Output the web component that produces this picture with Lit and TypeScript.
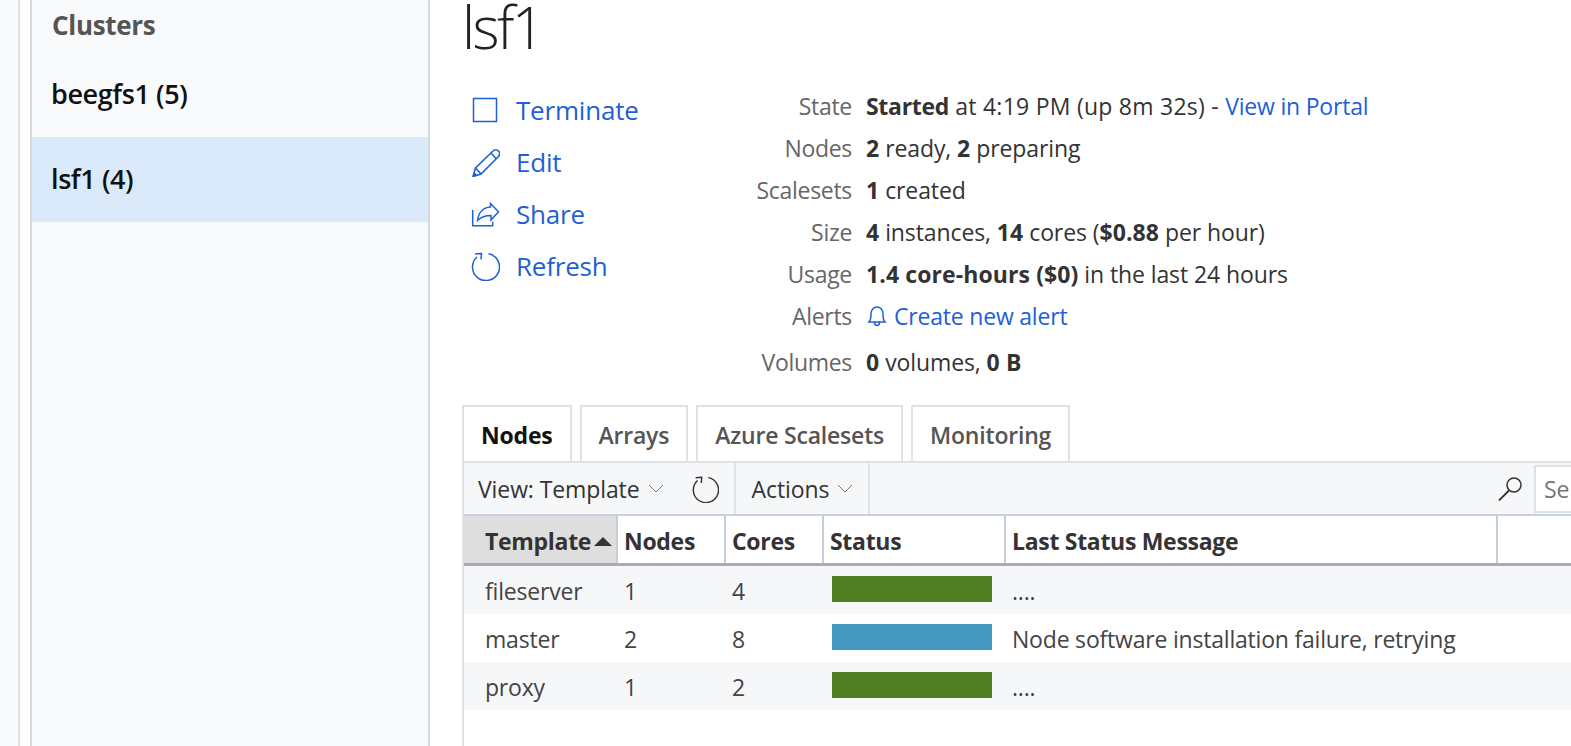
import { LitElement, html, css, svg } from 'lit';
import { customElement } from 'lit/decorators.js';

const refreshPath = svg`<path d="M18.500 2.800A13.500 13.500 0 1 1 7 6M5 3l6.500-.5L11 8.500" fill="none" stroke="currentColor" stroke-width="1.500"/>`;

const icons = {
  stop: svg`<rect x="3.500" y="3.500" width="23" height="23" fill="none" stroke="currentColor" stroke-width="1.500"/>`,
  edit: svg`<path d="M3 29.500L5.500 21 22.500 4.500c2-2 4.500-2 6-.5s1.500 4-.5 6L11 27zM5.500 21l5.500 6M21 6l5.500 6" fill="none" stroke="currentColor" stroke-width="1.600"/><path d="M3 29.500l1.200-4.500 3.300 3.300z" fill="currentColor"/>`,
  share: svg`<path d="M2.700 11v15.700h20v-4M20.500 4.500l8 8.200-7.500 8.300v-4.500c-6 0-10 1.500-13.500 5 1-7.500 5.500-13 13-13.500z" fill="none" stroke="currentColor" stroke-width="1.500"/>`,
  refresh: refreshPath,
};

@customElement('app-root')
export class AppRoot extends LitElement {
  static styles = css`
    :host {
      display: block;
      height: 746px;
      width: 1571px;
      overflow: hidden;
      background: #fff;
      font-family: 'Open Sans', 'Noto Sans', sans-serif;
      font-size: 22px;
      color: #333;
    }
    .page { display: flex; height: 746px; }
    .rail { width: 18px; background: #f8fafc; border-right: 2px solid #dde1e6; }
    .gap { width: 10px; }
    .side {
      width: 396px;
      background: #f8fafc;
      border-left: 2px solid #d5d9de;
      border-right: 2px solid #d5d9de;
    }
    .side h3 { margin: 0; padding: 7px 0 0 20px; height: 52px; box-sizing: border-box; font-size: 26px; font-weight: 700; color: #555; letter-spacing: -0.3px; line-height: 36px; }
    .item { display: flex; align-items: center; padding: 0 0 2px 19px; height: 85px; box-sizing: border-box; font-size: 27px; font-weight: 600; color: #111; letter-spacing: -0.4px; }
    .item.sel { background: #dbeafb; }
    .main { flex: 1; padding-left: 32px; min-width: 0; }
    h1 { margin: 0; height: 82px; font-size: 58px; font-weight: 300; line-height: 54px; color: #222; letter-spacing: -2.6px; }
    .summary { display: flex; height: 323px; }
    .actions { width: 285px; padding: 2px 0 0 8px; box-sizing: border-box; }
    .action { display: flex; align-items: center; gap: 16px; height: 52px; color: #1f5fd6; font-size: 26px; letter-spacing: -0.2px; }
    .action svg { width: 30px; height: 30px; }
    .props { display: grid; grid-template-columns: 103px auto; column-gap: 14px; grid-auto-rows: 42px; align-content: start; font-size: 23px; letter-spacing: -0.1px; margin-left: 2px; padding-top: 8px; }
    .props .k { text-align: right; color: #666; white-space: nowrap; justify-self: end; letter-spacing: -0.3px; }
    .props .v { white-space: nowrap; }
    .props b { letter-spacing: 0.1px; }
    .props b.tight { letter-spacing: -0.3px; }
    .props .time { letter-spacing: 0.25px; }
    .props a { color: #1f5fd6; text-decoration: none; letter-spacing: -0.2px; }
    .props .vol { margin-top: 4px; }
    .bell { display: inline-block; vertical-align: -3px; width: 22px; height: 24px; margin-right: 6px; }
    .tabs { display: flex; gap: 8px; height: 56px; }
    .tab { border: 2px solid #dde2e8; border-bottom: none; padding: 1px 17px 0; display: flex; align-items: center; font-size: 23px; font-weight: 600; color: #555; letter-spacing: -0.2px; }
    .tab.on { color: #111; font-weight: 700; }
    .panel { border-left: 2px solid #dde2e8; height: 285px; }
    .toolbar { display: flex; align-items: stretch; height: 55px; box-sizing: border-box; background: #f6f7f9; border-top: 2px solid #dde2e8; border-bottom: 2px solid #c9d1dc; font-size: 23px; letter-spacing: -0.1px; color: #333; }
    .tool { display: flex; align-items: center; padding: 0 15px 0 14px; border-right: 2px solid #dde2e8; gap: 8px; }
    .tool + .tool { padding: 0 15px 0 16px; }
    .tool .spin { margin-left: 19px; width: 28px; height: 28px; color: #333; }
    .spacer { flex: 1; }
    .search { display: flex; align-items: center; gap: 12px; }
    .search .box { width: 37px; height: 48px; background: #fff; border: 2px solid #dde2e8; border-right: none; color: #777; padding-left: 8px; box-sizing: border-box; display: flex; align-items: center; overflow: hidden; }
    .row { display: grid; grid-template-columns: 154px 108px 98px 182px 492px 1fr; align-items: center; }
    .head { height: 50px; box-sizing: border-box; border-bottom: 3px solid #a9adb3; font-weight: 700; font-size: 23px; letter-spacing: -0.3px; }
    .head > div { height: 100%; display: flex; align-items: center; padding: 3px 0 0 6px; box-sizing: border-box; border-right: 2px solid #c8ccd6; }
    .head > div.sorted { background: #dedede; padding-left: 21px; }
    .head > div:last-child { border-right: none; }
    .tri { width: 0; height: 0; border: 9px solid transparent; border-top: none; border-bottom-color: #333; margin-left: 3px; }
    .body { height: 48px; font-size: 23px; letter-spacing: -0.2px; color: #444; }
    .body.odd { background: #f6f7f9; }
    .body > div { padding: 2px 0 0 6px; }
    .body > div:first-child { padding-left: 21px; }
    .body > div.status { padding-top: 0; }
    .bar { height: 26px; width: 160px; margin-left: 2px; margin-top: -2px; }
  `;

  render() {
    const rows: [string, number, number, string, string][] = [
      ['fileserver', 1, 4, '#507d22', '....'],
      ['master', 2, 8, '#4398c0', 'Node software installation failure, retrying'],
      ['proxy', 1, 2, '#507d22', '....'],
    ];
    const chevron = html`<svg width="16" height="10" viewBox="0 0 16 10"><path d="M1 1l7 7 7-7" fill="none" stroke="#777" stroke-width="1"/></svg>`;
    return html`
      <div class="page">
        <div class="rail"></div>
        <div class="gap"></div>
        <div class="side">
          <h3>Clusters</h3>
          <div class="item">beegfs1 (5)</div>
          <div class="item sel">lsf1 (4)</div>
        </div>
        <div class="main">
          <h1>lsf1</h1>
          <div class="summary">
            <div class="actions">
              ${([['stop', 'Terminate'], ['edit', 'Edit'], ['share', 'Share'], ['refresh', 'Refresh']] as [keyof typeof icons, string][]).map(
                ([i, t]) => html`<div class="action"><svg viewBox="0 0 30 30">${icons[i]}</svg><span>${t}</span></div>`
              )}
            </div>
            <div class="props">
              <div class="k">State</div><div class="v"><b class="tight">Started</b><span class="time"> at 4:19 PM (up 8m 32s) - </span><a>View in Portal</a></div>
              <div class="k">Nodes</div><div class="v"><b>2</b> ready, <b>2</b> preparing</div>
              <div class="k">Scalesets</div><div class="v"><b>1</b> created</div>
              <div class="k">Size</div><div class="v"><b>4</b> instances, <b>14</b> cores (<b>$0.88</b> per hour)</div>
              <div class="k">Usage</div><div class="v"><b>1.4 core-hours ($0)</b> in the last 24 hours</div>
              <div class="k">Alerts</div><div class="v"><a><svg class="bell" viewBox="0 0 22 24"><path d="M3 18c2-2 2-4 2-8 0-4 2.500-7 6-7s6 3 6 7c0 4 0 6 2 8zM8.500 18.500c0 4 5 4 5 0" fill="none" stroke="currentColor" stroke-width="1.500"/></svg>Create new alert</a></div>
              <div class="k vol">Volumes</div><div class="v vol"><b>0</b> volumes, <b>0 B</b></div>
            </div>
          </div>
          <div class="tabs">
            <div class="tab on">Nodes</div><div class="tab">Arrays</div><div class="tab">Azure Scalesets</div><div class="tab">Monitoring</div>
          </div>
          <div class="panel">
            <div class="toolbar">
              <div class="tool">View: Template
                ${chevron}
                <svg class="spin" viewBox="0 0 30 30">${refreshPath}</svg>
              </div>
              <div class="tool">Actions ${chevron}</div>
              <div class="spacer"></div>
              <div class="search">
                <svg width="24" height="24" viewBox="0 0 24 24"><circle cx="16" cy="8" r="7" fill="none" stroke="#333" stroke-width="1.500"/><path d="M11 13.500L1 23.500" stroke="#333" stroke-width="1.800"/></svg>
                <div class="box">Se</div>
              </div>
            </div>
            <div class="row head">
              <div class="sorted">Template<span class="tri"></span></div><div>Nodes</div><div>Cores</div><div>Status</div><div>Last Status Message</div><div></div>
            </div>
            ${rows.map(
              ([name, n, c, col, msg], i) => html`<div class="row body ${i % 2 === 0 ? 'odd' : ''}">
                <div>${name}</div><div>${n}</div><div>${c}</div>
                <div class="status"><div class="bar" style="background:${col}"></div></div>
                <div>${msg}</div><div></div>
              </div>`
            )}
          </div>
        </div>
      </div>
    `;
  }
}
